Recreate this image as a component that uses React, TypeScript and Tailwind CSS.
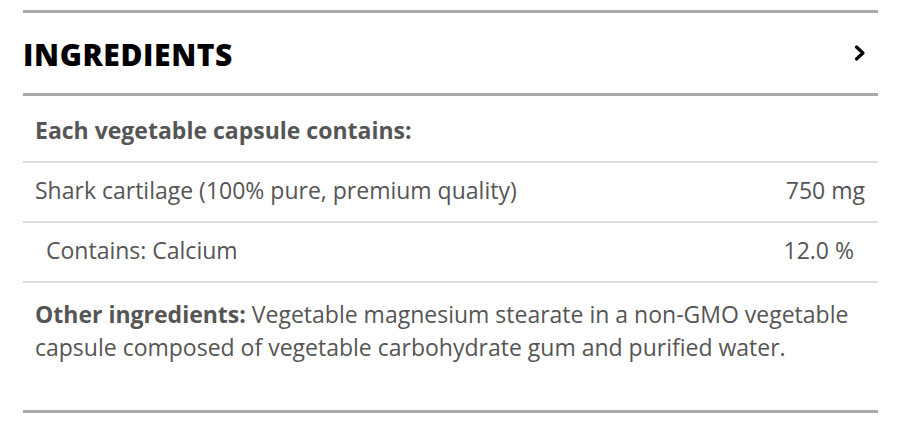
export default function App() {
  const rows = [
    { name: "Shark cartilage (100% pure, premium quality)", value: "750 mg", indent: false },
    { name: "Contains: Calcium", value: "12.0 %", indent: true },
  ];

  return (
    <div className="w-[914px] h-[424px] bg-white pt-[10px]" style={{ fontFamily: '"Open Sans", "Noto Sans", sans-serif' }}>
      <div className="ml-[23px] w-[855px]">
        <div className="border-t-[3px] border-[#aaaaaa] border-b-[3px] h-[86px] flex items-center justify-between">
          <h2 className="text-[30px] font-extrabold text-black tracking-[0.6px] pt-[2px]">INGREDIENTS</h2>
          <svg width="14" height="18" viewBox="0 0 14 18" className="mr-[11px]">
            <path d="M3.5 3 L10 9 L3.5 15" fill="none" stroke="#000" strokeWidth="3.2" strokeLinecap="round" strokeLinejoin="round" />
          </svg>
        </div>
        <div className="text-[#555555] text-[23px]">
          <div className="h-[67px] flex items-center pl-[12px] pt-[3px] font-bold border-b-2 border-[#dddddd]">
            Each vegetable capsule contains:
          </div>
          {rows.map((r, i) => (
            <div key={i} className="h-[60px] flex items-center justify-between pb-[3px] border-b-2 border-[#dddddd]">
              <span className={r.indent ? "pl-[23px]" : "pl-[12px]"}>{r.name}</span>
              <span className={r.indent ? "pr-[24px]" : "pr-[13px]"}>{r.value}</span>
            </div>
          ))}
          <p className="pl-[12px] pt-[15px] pr-[16px] leading-[33px] h-[130px] border-b-[3px] border-[#aaaaaa]">
            <span className="font-bold">Other ingredients:</span> Vegetable magnesium stearate in a non-GMO vegetable capsule composed of vegetable carbohydrate gum and purified water.
          </p>
        </div>
      </div>
    </div>
  );
}
